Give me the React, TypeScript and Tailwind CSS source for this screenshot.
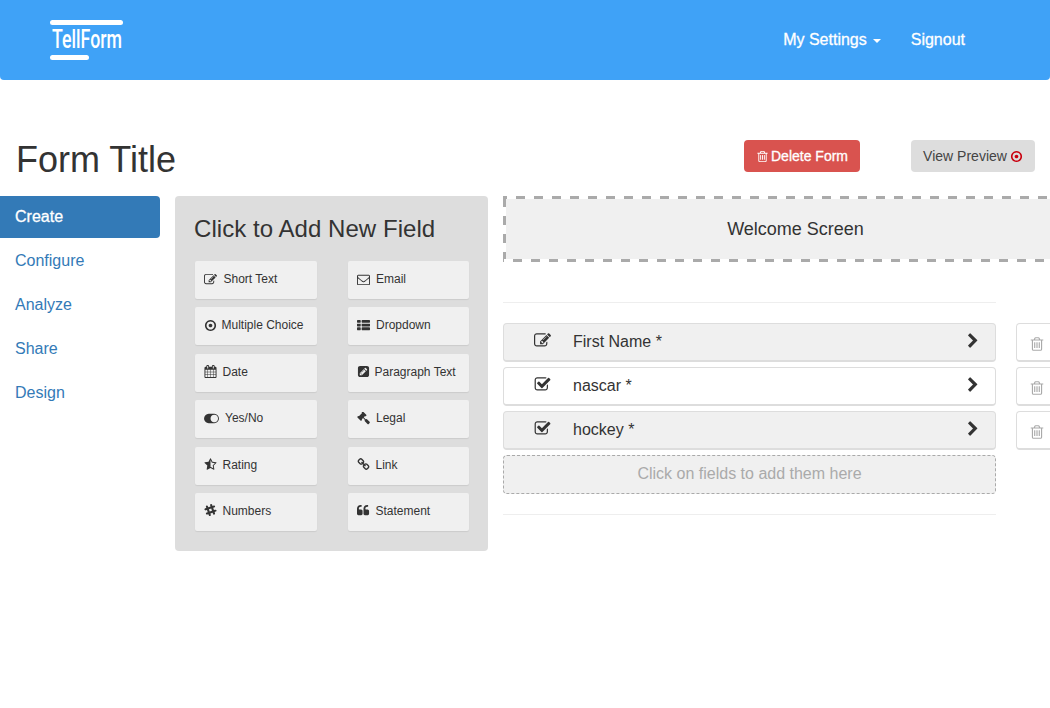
import React from 'react';

// Font Awesome 4 glyphs, the react-icons set only ships the newer drawings
const paths = {
  edit: 'M888 1184l116-116-152-152-116 116v56h96v96h56zm440-720q-16-16-33 1l-350 350q-17 17-1 33t33-1l350-350q17-17 1-33zm80 594v190q0 119-84.5 203.5t-203.5 84.5h-832q-119 0-203.5-84.5t-84.5-203.5v-832q0-119 84.5-203.5t203.5-84.5h832q63 0 117 25 15 7 18 23 3 17-9 29l-49 49q-14 14-32 8-23-6-45-6h-832q-66 0-113 47t-47 113v832q0 66 47 113t113 47h832q66 0 113-47t47-113v-126q0-13 9-22l64-64q15-15 35-7t20 29zm-96-738l288 288-672 672h-288v-288zm444 132l-92 92-288-288 92-92q28-28 68-28t68 28l152 152q28 28 28 68t-28 68z',
  check: 'M1472 930v318q0 119-84.5 203.5t-203.5 84.5h-832q-119 0-203.5-84.5t-84.5-203.5v-832q0-119 84.5-203.5t203.5-84.5h832q63 0 117 25 15 7 18 23 3 17-9 29l-49 49q-10 10-23 10-3 0-9-2-23-6-45-6h-832q-66 0-113 47t-47 113v832q0 66 47 113t113 47h832q66 0 113-47t47-113v-254q0-13 9-22l64-64q10-10 23-10 6 0 12 3 20 8 20 29zm231-489l-814 814q-24 24-57 24t-57-24l-430-430q-24-24-24-57t24-57l110-110q24-24 57-24t57 24l263 263 647-647q24-24 57-24t57 24l110 110q24 24 24 57t-24 57z',
  chevron: 'M1363 877l-742 742q-19 19-45 19t-45-19l-166-166q-19-19-19-45t19-45l531-531-531-531q-19-19-19-45t19-45l166-166q19-19 45-19t45 19l742 742q19 19 19 45t-19 45z',
  trash: 'M704 736v576q0 14-9 23t-23 9h-64q-14 0-23-9t-9-23v-576q0-14 9-23t23-9h64q14 0 23 9t9 23zm256 0v576q0 14-9 23t-23 9h-64q-14 0-23-9t-9-23v-576q0-14 9-23t23-9h64q14 0 23 9t9 23zm256 0v576q0 14-9 23t-23 9h-64q-14 0-23-9t-9-23v-576q0-14 9-23t23-9h64q14 0 23 9t9 23zm128 724v-948h-896v948q0 22 7 40.5t14.5 27 10.5 8.5h832q3 0 10.5-8.5t14.5-27 7-40.5zm-672-1076h448l-48-117q-7-9-17-11h-317q-10 2-17 11zm928 32v64q0 14-9 23t-23 9h-96v948q0 83-47 143.5t-113 60.5h-832q-66 0-113-58.5t-47-141.5v-952h-96q-14 0-23-9t-9-23v-64q0-14 9-23t23-9h309l70-167q15-37 54-63t79-26h320q40 0 79 26t54 63l70 167h309q14 0 23 9t9 23z',
  dot: 'M1152 896q0 106-75 181t-181 75-181-75-75-181 75-181 181-75 181 75 75 181zm-256-544q-148 0-273 73t-198 198-73 273 73 273 198 198 273 73 273-73 198-198 73-273-73-273-198-198-273-73zm768 544q0 209-103 385.5t-279.5 279.5-385.5 103-385.5-103-279.5-279.5-103-385.5 103-385.5 279.5-279.5 385.5-103 385.5 103 279.5 279.5 103 385.5z',
  envelope: 'M1664 1504v-768q-32 36-69 66-268 206-426 338-51 43-83 67t-86.5 48.5-102.5 24.5h-2q-48 0-102.5-24.5t-86.5-48.5-83-67q-158-132-426-338-37-30-69-66v768q0 13 9.5 22.5t22.5 9.5h1472q13 0 22.5-9.5t9.5-22.5zm0-1051v-24.5l-.5-13-3-12.5-5.5-9-9-7.5-14-2.5h-1472q-13 0-22.5 9.5t-9.5 22.5q0 168 147 284 193 152 401 317 6 5 35 29.5t46 37.5 44.5 31.5 50.5 27.5 43 9h2q20 0 43-9t50.5-27.5 44.5-31.5 46-37.5 35-29.5q208-165 401-317 54-43 100.5-115.5t46.5-131.5zm128-37v1088q0 66-47 113t-113 47h-1472q-66 0-113-47t-47-113v-1088q0-66 47-113t113-47h1472q66 0 113 47t47 113z',
  star: 'M1250 957l257-250-356-52-66-10-30-60-159-322v963l59 31 318 168-60-355-12-66zm452-262l-363 354 86 500q5 33-6 51.5t-34 18.5q-17 0-40-12l-449-236-449 236q-23 12-40 12-23 0-34-18.5t-6-51.5l86-500-364-354q-32-32-23-59.5t54-34.5l502-73 225-455q20-41 49-41 28 0 49 41l225 455 502 73q45 7 54 34.5t-24 59.5z',
  calendar: 'M192 1664h288v-288h-288v288zm352 0h320v-288h-320v288zm-352-352h288v-320h-288v320zm352 0h320v-320h-320v320zm-352-384h288v-288h-288v288zm736 736h320v-288h-320v288zm-384-736h320v-288h-320v288zm768 736h288v-288h-288v288zm-384-352h320v-320h-320v320zm-352-864v-288q0-13-9.5-22.5t-22.5-9.5h-64q-13 0-22.5 9.5t-9.5 22.5v288q0 13 9.5 22.5t22.5 9.5h64q13 0 22.5-9.5t9.5-22.5zm736 864h288v-320h-288v320zm-384-384h320v-288h-320v288zm384 0h288v-288h-288v288zm32-480v-288q0-13-9.5-22.5t-22.5-9.5h-64q-13 0-22.5 9.5t-9.5 22.5v288q0 13 9.5 22.5t22.5 9.5h64q13 0 22.5-9.5t9.5-22.5zm384-64v1280q0 52-38 90t-90 38h-1408q-52 0-90-38t-38-90v-1280q0-52 38-90t90-38h128v-96q0-66 47-113t113-47h64q66 0 113 47t47 113v96h384v-96q0-66 47-113t113-47h64q66 0 113 47t47 113v96h128q52 0 90 38t38 90z',
  list: 'M512 1248v192q0 40-28 68t-68 28h-320q-40 0-68-28t-28-68v-192q0-40 28-68t68-28h320q40 0 68 28t28 68zm0-512v192q0 40-28 68t-68 28h-320q-40 0-68-28t-28-68v-192q0-40 28-68t68-28h320q40 0 68 28t28 68zm1280 512v192q0 40-28 68t-68 28h-960q-40 0-68-28t-28-68v-192q0-40 28-68t68-28h960q40 0 68 28t28 68zm-1280-1024v192q0 40-28 68t-68 28h-320q-40 0-68-28t-28-68v-192q0-40 28-68t68-28h320q40 0 68 28t28 68zm1280 512v192q0 40-28 68t-68 28h-960q-40 0-68-28t-28-68v-192q0-40 28-68t68-28h960q40 0 68 28t28 68zm0-512v192q0 40-28 68t-68 28h-960q-40 0-68-28t-28-68v-192q0-40 28-68t68-28h960q40 0 68 28t28 68z',
  toggle: 'M0 896q0-130 51-248.5t136.5-204 204-136.5 248.5-51h768q130 0 248.5 51t204 136.5 136.5 204 51 248.5-51 248.5-136.5 204-204 136.5-248.5 51h-768q-130 0-248.5-51t-204-136.5-136.5-204-51-248.5zm1408 512q104 0 198.5-40.5t163.5-109.5 109.5-163.5 40.5-198.5-40.5-198.5-109.5-163.5-163.5-109.5-198.5-40.5-198.5 40.5-163.5 109.5-109.5 163.5-40.5 198.5 40.5 198.5 109.5 163.5 163.5 109.5 198.5 40.5z',
  gavel: 'M1771 1440q0 53-37 90l-107 108q-39 37-91 37-53 0-90-37l-363-364q-38-36-38-90 0-53 43-96l-256-256-126 126q-14 14-34 14t-34-14q2 2 12.5 12t12.5 13 10 11.5 10 13.5 6 13.5 5.5 16.5 1.5 18q0 38-28 68-3 3-16.5 18t-19 20.5-18.5 16.5-22 15.5-22 9-26 4.5q-40 0-68-28l-408-408q-28-28-28-68 0-13 4.5-26t9-22 15.5-22 16.5-18.5 20.5-19 18-16.5q30-28 68-28 10 0 18 1.5t16.5 5.5 13.5 6 13.5 10 11.5 10 13 12.5 12 12.5q-14-14-14-34t14-34l348-348q14-14 34-14t34 14q-2-2-12.5-12t-12.5-13-10-11.5-10-13.5-6-13.5-5.5-16.5-1.5-18q0-38 28-68 3-3 16.5-18t19-20.5 18.5-16.5 22-15.5 22-9 26-4.5q40 0 68 28l408 408q28 28 28 68 0 13-4.5 26t-9 22-15.5 22-16.5 18.5-20.5 19-18 16.5q-30 28-68 28-10 0-18-1.5t-16.5-5.5-13.5-6-13.5-10-11.5-10-13-12.5-12-12.5q14 14 14 34t-14 34l-126 126 256 256q43-43 96-43 52 0 91 37l363 363q37 39 37 91z',
  link: 'M1520 1216q0-40-28-68l-208-208q-28-28-68-28-42 0-72 32 3 3 19 18.5t21.5 21.5 15 19 13 25.5 3.5 27.5q0 40-28 68t-68 28q-15 0-27.5-3.5t-25.5-13-19-15-21.5-21.5-18.5-19q-33 31-33 73 0 40 28 68l206 207q27 27 68 27 40 0 68-26l147-146q28-28 28-67zm-703-705q0-40-28-68l-206-207q-28-28-68-28-39 0-68 27l-147 146q-28 28-28 67 0 40 28 68l208 208q27 27 68 27 42 0 72-31-3-3-19-18.5t-21.5-21.5-15-19-13-25.5-3.5-27.5q0-40 28-68t68-28q15 0 27.5 3.5t25.5 13 19 15 21.5 21.5 18.5 19q33-31 33-73zm895 705q0 120-85 203l-147 146q-83 83-203 83-121 0-204-85l-206-207q-83-83-83-203 0-123 88-209l-88-88q-86 88-208 88-120 0-204-84l-208-208q-84-84-84-204t85-203l147-146q83-83 203-83 121 0 204 85l206 207q83 83 83 203 0 123-88 209l88 88q86-88 208-88 120 0 204 84l208 208q84 84 84 204z',
  quote: 'M768 960v384q0 80-56 136t-136 56h-384q-80 0-136-56t-56-136v-704q0-104 40.5-198.5t109.5-163.5 163.5-109.5 198.5-40.5h64q26 0 45 19t19 45v128q0 26-19 45t-45 19h-64q-106 0-181 75t-75 181v32q0 40 28 68t68 28h224q80 0 136 56t56 136zm896 0v384q0 80-56 136t-136 56h-384q-80 0-136-56t-56-136v-704q0-104 40.5-198.5t109.5-163.5 163.5-109.5 198.5-40.5h64q26 0 45 19t19 45v128q0 26-19 45t-45 19h-64q-106 0-181 75t-75 181v32q0 40 28 68t68 28h224q80 0 136 56t56 136z',
  pencil: 'M532 1108l152 152-52 52h-56v-96h-96v-56zm414-390q14 13-3 30l-291 291q-17 17-30 3-14-13 3-30l291-291q17-17 30-3zm-274 690l544-544-288-288-544 544v288h288zm608-608l92-92q28-28 28-68t-28-68l-152-152q-28-28-68-28t-68 28l-92 92zm384-384v960q0 119-84.5 203.5t-203.5 84.5h-960q-119 0-203.5-84.5t-84.5-203.5v-960q0-119 84.5-203.5t203.5-84.5h960q119 0 203.5 84.5t84.5 203.5z',
  slack: 'M1583 776q62 0 103.5 40.5t41.5 101.5q0 97-93 130l-172 59 56 167q7 21 7 47 0 59-42 102t-101 43q-47 0-85.5-27t-53.5-72l-55-165-310 106 55 164q8 24 8 47 0 59-42 102t-102 43q-47 0-85-27t-53-72l-55-163-153 53q-29 9-50 9-61 0-101.5-40t-40.5-101q0-47 27.5-85t71.5-53l156-53-105-313-156 54q-26 8-48 8-60 0-101-40.5t-41-100.5q0-47 27.5-85t71.5-53l157-53-53-159q-8-24-8-47 0-60 42-102.5t102-42.5q47 0 85 27t53 72l54 160 310-105-54-160q-8-24-8-47 0-59 42.5-102t101.5-43q47 0 85.5 27.5t53.5 71.5l53 161 162-55q21-6 43-6 60 0 102.5 39.5t42.5 98.5q0 45-30 81.5t-74 51.5l-157 54 105 316 164-56q24-8 46-8zm-794 262l310-105-105-315-310 107z',
};

type IconName = keyof typeof paths;

function Icon({ name, className }: { name: IconName; className?: string }) {
  const width = name === 'toggle' ? 2048 : 1792;
  return (
    <svg viewBox={`0 0 ${width} 1792`} className={className} fill="currentColor" aria-hidden="true">
      <path d={paths[name]} />
    </svg>
  );
}

type Field = { label: string; icon: IconName; gap: string; iconSize: string };

const leftFields: Field[] = [
  { label: 'Short Text', icon: 'edit', gap: 'ml-[6.5px]', iconSize: 'w-[13px]' },
  { label: 'Multiple Choice', icon: 'dot', gap: 'ml-[4.5px]', iconSize: 'w-[13px]' },
  { label: 'Date', icon: 'calendar', gap: 'ml-[5.5px]', iconSize: 'w-[13px]' },
  { label: 'Yes/No', icon: 'toggle', gap: 'ml-[6px]', iconSize: 'w-[15px]' },
  { label: 'Rating', icon: 'star', gap: 'ml-[5.5px]', iconSize: 'w-[13px]' },
  { label: 'Numbers', icon: 'slack', gap: 'ml-[5.5px]', iconSize: 'w-[13px]' },
];

const rightFields: Field[] = [
  { label: 'Email', icon: 'envelope', gap: 'ml-[6.5px]', iconSize: 'w-[13px]' },
  { label: 'Dropdown', icon: 'list', gap: 'ml-[6.5px]', iconSize: 'w-[13px]' },
  { label: 'Paragraph Text', icon: 'pencil', gap: 'ml-[5px]', iconSize: 'w-[13px]' },
  { label: 'Legal', icon: 'gavel', gap: 'ml-[6.5px]', iconSize: 'w-[13px]' },
  { label: 'Link', icon: 'link', gap: 'ml-[6px]', iconSize: 'w-[13px]' },
  { label: 'Statement', icon: 'quote', gap: 'ml-[6px]', iconSize: 'w-[13px]' },
];

const formFields: { label: string; icon: IconName; bg: string }[] = [
  { label: 'First Name *', icon: 'edit', bg: 'bg-[#f0f0f0]' },
  { label: 'nascar *', icon: 'check', bg: 'bg-white' },
  { label: 'hockey *', icon: 'check', bg: 'bg-[#f0f0f0]' },
];

function FieldColumn({ fields }: { fields: Field[] }) {
  return (
    <div className="flex w-[121.5px] flex-col gap-[8.4px]">
      {fields.map((field) => (
        <div
          key={field.label}
          className="flex h-[38px] items-center rounded-[2px] bg-[#f0f0f0] pb-[2px] pl-[9px] text-[12px] text-[#333] shadow-[0_1px_1px_rgba(0,0,0,0.08)]"
        >
          <Icon name={field.icon} className={`h-[13px] shrink-0 text-[#333] ${field.iconSize}`} />
          <span className={field.gap}>{field.label}</span>
        </div>
      ))}
    </div>
  );
}

export default function App() {
  return (
    <div className="h-[708px] w-[1050px] overflow-hidden bg-white font-['Liberation_Sans',Arial,sans-serif] text-[#333]">
      <nav className="flex h-[80px] items-center justify-between rounded-b-[4px] bg-[#3fa2f7] pl-[50px] pr-[85px] text-white">
        <div className="flex w-[73px] flex-col">
          <div className="h-[5px] rounded-full bg-white" />
          <div className="my-[1px] ml-[2px] h-[28px] origin-left scale-x-[0.71] whitespace-nowrap font-['Roboto',sans-serif] text-[25px] font-medium leading-[28px]">
            TellForm
          </div>
          <div className="h-[5px] w-[39px] rounded-full bg-white" />
        </div>
        <div className="flex items-center text-[16px] [-webkit-text-stroke:0.3px_white]">
          <span>My Settings</span>
          <span className="ml-[6px] mt-[2px] h-0 w-0 border-x-[4px] border-t-[4px] border-x-transparent border-t-white" />
          <span className="ml-[30px]">Signout</span>
        </div>
      </nav>

      <header className="flex h-[116px] items-end">
        <h1 className="mb-[16px] ml-[16px] text-[36px] leading-[40px] text-[#333]">Form Title</h1>
        <button className="mb-[24px] ml-auto flex h-[32px] w-[116px] items-center justify-center rounded-[4px] bg-[#d9534f] text-[14px] text-white [-webkit-text-stroke:0.3px_white]">
          <Icon name="trash" className="h-[13px] w-[13px] [-webkit-text-stroke:0]" />
          <span className="ml-[2px]">Delete Form</span>
        </button>
        <button className="mb-[24px] ml-[51px] mr-[15px] flex h-[32px] w-[124px] items-center justify-center gap-[3px] rounded-[4px] bg-[#ddd] text-[14px] text-[#444]">
          View Preview
          <Icon name="dot" className="h-[13px] w-[13px] text-[#c9000f]" />
        </button>
      </header>

      <main className="flex items-start">
        <aside className="flex w-[160px] shrink-0 flex-col gap-[2px] text-[16px] text-[#337ab7]">
          <div className="flex h-[42px] items-center rounded-r-[4px] bg-[#337ab7] pl-[15px] text-white [-webkit-text-stroke:0.3px_white]">
            Create
          </div>
          <div className="flex h-[42px] items-center pl-[15px]">Configure</div>
          <div className="flex h-[42px] items-center pl-[15px]">Analyze</div>
          <div className="flex h-[42px] items-center pl-[15px]">Share</div>
          <div className="flex h-[42px] items-center pl-[15px]">Design</div>
        </aside>

        <section className="ml-[15px] h-[355px] w-[313px] shrink-0 rounded-[4px] bg-[#ddd] pl-[20px] pr-[19px] pt-[18px]">
          <h2 className="-ml-[1px] text-[24px] leading-[29px] tracking-[0.05px] text-[#333]">Click to Add New Field</h2>
          <div className="mt-[18px] flex justify-between">
            <FieldColumn fields={leftFields} />
            <FieldColumn fields={rightFields} />
          </div>
        </section>

        <section className="ml-[15px] w-[582px] shrink-0">
          <div className="flex h-[66px] flex-col">
            <div className="h-[3px] bg-[repeating-linear-gradient(90deg,#aaa_0_4px,transparent_4px_13px,#aaa_13px_18px)]" />
            <div className="flex flex-1">
              <div className="w-[3px] bg-[repeating-linear-gradient(180deg,#aaa_0_8px,transparent_8px_17px,#aaa_17px_18px)]" />
              <div className="flex flex-1 items-center justify-center bg-[#f0f0f0] text-[18px] text-[#333]">
                Welcome Screen
              </div>
            </div>
            <div className="h-[3px] bg-[repeating-linear-gradient(90deg,#aaa_0_1px,transparent_1px_10px,#aaa_10px_18px)]" />
          </div>
          <div className="mt-[40px] w-[493px] border-t border-[#eee]" />
          <div className="mt-[20px] flex gap-[20px]">
            <div className="flex w-[493px] shrink-0 flex-col gap-[5px]">
              {formFields.map((field) => (
                <div
                  key={field.label}
                  className={`flex h-[39px] items-center rounded-[4px] border border-b-2 border-[#ddd] pl-[29.5px] pr-[14px] text-[16px] text-[#333] ${field.bg}`}
                >
                  <Icon name={field.icon} className="mb-[3px] h-[17px] w-[17px] shrink-0 text-[#333]" />
                  <span className="ml-[22.5px]">{field.label}</span>
                  <Icon name="chevron" className="mb-[2px] ml-auto h-[16px] w-[16px] text-[#333]" />
                </div>
              ))}
              <div className="flex h-[39px] items-center justify-center rounded-[4px] border border-dashed border-[#aaa] bg-[#f0f0f0] pb-[2px] text-[16px] text-[#aaa]">
                Click on fields to add them here
              </div>
            </div>
            <div className="flex w-[50px] shrink-0 flex-col gap-[5px]">
              {formFields.map((field) => (
                <div
                  key={field.label}
                  className="flex h-[39px] items-center rounded-[4px] border border-b-2 border-[#ddd] bg-white pl-[12px] pt-[3px]"
                >
                  <Icon name="trash" className="h-[16px] w-[16px] text-[#aaa]" />
                </div>
              ))}
            </div>
          </div>
          <div className="mt-[20px] w-[493px] border-t border-[#eee]" />
        </section>
      </main>
    </div>
  );
}
